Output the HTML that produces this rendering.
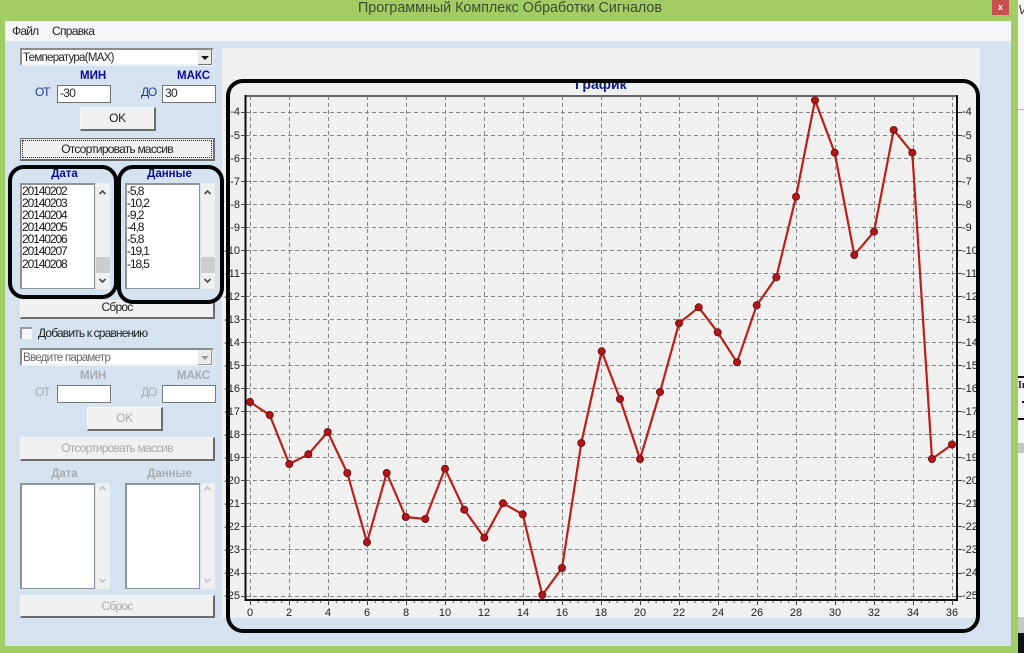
<!DOCTYPE html>
<html lang="ru">
<head>
<meta charset="utf-8">
<title>Программный Комплекс Обработки Сигналов</title>
<style>
html,body{margin:0;padding:0;width:1024px;height:653px;overflow:hidden;background:#a1cd64;}
body{position:relative;font-family:"Liberation Sans","Noto Sans CJK SC",sans-serif;font-size:12px;color:#222;}
div,span{position:absolute;box-sizing:border-box;white-space:nowrap;}
.t{line-height:14px;height:14px;}
.c{text-align:center;}
.head{font-weight:bold;font-size:11.5px;color:#0a0a9c;}
.lab{font-size:12px;color:#1d3f8f;letter-spacing:-1.2px;}
.dis{color:#a9abad;}
.inp{background:#fff;border:1px solid #6f7378;font-size:12px;line-height:15px;padding-left:2px;letter-spacing:-.7px;}
.inpd{background:#fff;border:1px solid #777;}
.btn{background:#f0f0f0;border:1px solid #f8f8f8;border-right:2px solid #6c6c6c;border-bottom:2px solid #6c6c6c;text-align:center;font-size:12px;letter-spacing:-.78px;}
.combo{background:#fff;border:2px solid #8a8c8e;border-right-color:#e6e6e6;border-bottom-color:#eef2f6;font-size:11.5px;line-height:16px;padding-left:1px;letter-spacing:-.72px;}
.arr{background:#ececec;border-right:1px solid #777;border-bottom:1px solid #777;}
.arr i{position:absolute;left:3px;top:6px;width:0;height:0;border-left:4px solid transparent;border-right:4px solid transparent;border-top:4px solid #111;}
.list{background:#fff;border:2px solid #8c949c;border-right-width:1.5px;border-bottom-width:1.5px;}
.row{font-size:12px;line-height:12.1px;letter-spacing:-1.1px;color:#151515;left:0;top:0;white-space:pre;}
.sb{background:#f0f0f0;}
.th{background:#cdcdcd;left:0;width:100%;}
.ring{border:4.5px solid #050505;border-radius:16px;}
</style>
</head>
<body>
<!-- outer window -->
<div style="left:0;top:0;width:1024px;height:653px;background:#a1cd64"></div>
<div class="t" style="left:358px;top:0;width:304px;font-size:14.3px;color:#3d4c30;line-height:16px;height:16px">Программный Комплекс Обработки Сигналов</div>
<div style="left:992px;top:0;width:17px;height:15px;background:#c65050"></div>
<div class="t c" style="left:992px;top:0;width:17px;color:#fff;font-weight:bold;font-size:9px;line-height:14px">x</div>

<!-- neighbouring window on the right edge -->
<div style="left:1018px;top:0;width:6px;height:653px;background:#f6f6f6"></div>
<div class="t" style="left:1018px;top:3px;font-size:13px;font-style:italic;color:#333">V</div>
<div style="left:1018px;top:109px;width:6px;height:1px;background:#bbb"></div>
<div style="left:1018px;top:376px;width:6px;height:2px;background:#111"></div>
<div class="t" style="left:1018px;top:379px;font-weight:bold;font-size:10px;font-family:'Liberation Serif',serif;color:#222">Ін</div>
<div style="left:1022px;top:401px;width:2px;height:2px;background:#111"></div>
<div style="left:1018px;top:418px;width:6px;height:2px;background:#111"></div>
<div style="left:1018px;top:443px;width:6px;height:10px;background:#c6c6c6"></div>
<div style="left:1018px;top:617px;width:6px;height:16px;background:#c8c8c8"></div>
<div style="left:1018px;top:633px;width:6px;height:20px;background:#111"></div>

<!-- client area -->
<div style="left:5px;top:21px;width:1006px;height:625px;background:#d5e3f1"></div>
<div style="left:5px;top:21px;width:1006px;height:20px;background:#f4f6f8"></div>
<div class="t" style="left:12px;top:24px;color:#222;letter-spacing:-.8px">Файл</div>
<div class="t" style="left:52px;top:24px;color:#222;letter-spacing:-.7px">Справка</div>

<!-- left panel, active group -->
<div class="combo" style="left:20px;top:48px;width:194px;height:18px">Температура(MAX)</div>
<div class="arr" style="left:198px;top:50px;width:14px;height:15px"><i></i></div>
<div class="t head" style="left:80px;top:69px">МИН</div>
<div class="t head" style="left:177px;top:69px">МАКС</div>
<div class="t lab" style="left:35px;top:85px">ОТ</div>
<div class="t lab" style="left:141px;top:85px">ДО</div>
<div class="inp" style="left:57px;top:85px;width:54px;height:18px">-30</div>
<div class="inp" style="left:162px;top:85px;width:54px;height:18px">30</div>
<div class="btn" style="left:80px;top:107px;width:76px;height:24px;line-height:21px;letter-spacing:-.3px">OK</div>
<div class="btn" style="left:20px;top:138px;width:195px;height:23px;line-height:21px;border:1px solid #6c6c6c;border-right-width:2px;border-bottom-width:2px">Отсортировать массив</div>
<div style="left:22px;top:140px;width:190px;height:18px;border:1px dotted #222"></div>

<div class="t head c" style="left:20px;top:167px;width:89px">Дата</div>
<div class="t head c" style="left:125px;top:167px;width:89px">Данные</div>
<div class="list" style="left:20px;top:183px;width:75px;height:106px"><span class="row">20140202
20140203
20140204
20140205
20140206
20140207
20140208</span></div>
<div class="sb" style="left:96px;top:183px;width:14px;height:106px"><div class="th" style="top:74px;height:16px"></div></div>
<div class="list" style="left:125px;top:183px;width:75px;height:106px"><span class="row">-5,8
-10,2
-9,2
-4,8
-5,8
-19,1
-18,5</span></div>
<div class="sb" style="left:201px;top:183px;width:14px;height:106px"><div class="th" style="top:74px;height:16px"></div></div>

<div class="btn" style="left:20px;top:300px;width:195px;height:19px;line-height:12px">Сброс</div>

<div style="left:20px;top:327px;width:12px;height:12px;background:#f4f6f8;border-left:2px solid #9a9a9a;border-top:2px solid #9a9a9a"></div>
<div class="t" style="left:38px;top:326px;color:#222;letter-spacing:-.85px">Добавить к сравнению</div>

<!-- left panel, disabled group -->
<div class="combo" style="left:20px;top:348px;width:194px;height:18px;color:#666">Введите параметр</div>
<div class="arr" style="left:198px;top:350px;width:14px;height:15px;border-color:#999"><i style="border-top-color:#999"></i></div>
<div class="t head dis" style="left:80px;top:369px">МИН</div>
<div class="t head dis" style="left:177px;top:369px">МАКС</div>
<div class="t lab dis" style="left:35px;top:385px">ОТ</div>
<div class="t lab dis" style="left:141px;top:385px">ДО</div>
<div class="inpd" style="left:57px;top:385px;width:54px;height:18px"></div>
<div class="inpd" style="left:162px;top:385px;width:54px;height:18px"></div>
<div class="btn dis" style="left:87px;top:407px;width:76px;height:24px;line-height:21px;letter-spacing:-.3px">OK</div>
<div class="btn dis" style="left:20px;top:437px;width:195px;height:24px;line-height:21px">Отсортировать массив</div>
<div class="t head dis c" style="left:20px;top:467px;width:89px">Дата</div>
<div class="t head dis c" style="left:125px;top:467px;width:89px">Данные</div>
<div class="list" style="left:20px;top:483px;width:75px;height:106px"></div>
<div class="sb" style="left:96px;top:483px;width:14px;height:106px"></div>
<div class="list" style="left:125px;top:483px;width:75px;height:106px"></div>
<div class="sb" style="left:201px;top:483px;width:14px;height:106px"></div>
<div class="btn dis" style="left:20px;top:595px;width:195px;height:23px;line-height:21px">Сброс</div>

<!-- scrollbar chevrons -->
<svg style="position:absolute;left:0;top:0" width="1024" height="653" viewBox="0 0 1024 653">
<path d="M99.5 194l3-3 3 3M99.5 279l3 3 3-3M204.500 194l3-3 3 3M204.500 279l3 3 3-3" fill="none" stroke="#4a4a4a" stroke-width="1.6"/>
<path d="M99.500 490l3-3 3 3M99.500 579l3 3 3-3M204.500 490l3-3 3 3M204.500 579l3 3 3-3" fill="none" stroke="#c4c4c4" stroke-width="1.6"/>
</svg>

<!-- chart panel -->
<div style="left:222px;top:48px;width:758px;height:570px;background:#f0f0f0"></div>
<div class="t" style="left:575px;top:77px;width:53px;font-weight:bold;font-size:14px;color:#0a1a8c;line-height:14px">График</div>

<svg style="position:absolute;left:0;top:0" width="1024" height="653" viewBox="0 0 1024 653">
<rect x="246" y="96" width="711" height="503" fill="#f0f0f0"/>
<!-- grid -->
<path fill="none" stroke="#858585" stroke-width="1" stroke-dasharray="4 3" d="M250.500 96V599M289.500 96V599M328.500 96V599M367.500 96V599M406.500 96V599M445.500 96V599M484.500 96V599M523.500 96V599M562.500 96V599M601.500 96V599M640.500 96V599M679.500 96V599M718.500 96V599M757.500 96V599M796.500 96V599M835.500 96V599M874.500 96V599M913.500 96V599M952.500 96V599M246 112.500H956M246 135.500H956M246 158.500H956M246 181.500H956M246 204.500H956M246 227.500H956M246 250.500H956M246 273.500H956M246 296.500H956M246 319.500H956M246 342.500H956M246 365.500H956M246 388.500H956M246 411.500H956M246 434.500H956M246 457.500H956M246 480.500H956M246 503.500H956M246 526.500H956M246 549.500H956M246 573.500H956M246 596.500H956"/>
<!-- frame -->
<path d="M246 96H957" stroke="#666" stroke-width="2" fill="none"/>
<path d="M245.500 95V600H957V95" stroke="#111" stroke-width="2" fill="none"/>
<!-- minor ticks -->
<line x1="250" y1="602" x2="953" y2="602" stroke="#666" stroke-width="2" stroke-dasharray="1 6.800"/>
<!-- major ticks -->
<path fill="none" stroke="#444" stroke-width="1" d="M250.500 600v5M289.500 600v5M328.500 600v5M367.500 600v5M406.500 600v5M445.500 600v5M484.500 600v5M523.500 600v5M562.500 600v5M601.500 600v5M640.500 600v5M679.500 600v5M718.500 600v5M757.500 600v5M796.500 600v5M835.500 600v5M874.500 600v5M913.500 600v5M952.500 600v5M241 112.500h4M241 135.500h4M241 158.500h4M241 181.500h4M241 204.500h4M241 227.500h4M241 250.500h4M241 273.500h4M241 296.500h4M241 319.500h4M241 342.500h4M241 365.500h4M241 388.500h4M241 411.500h4M241 434.500h4M241 457.500h4M241 480.500h4M241 503.500h4M241 526.500h4M241 549.500h4M241 573.500h4M241 596.500h4M958 112.500h4M958 135.500h4M958 158.500h4M958 181.500h4M958 204.500h4M958 227.500h4M958 250.500h4M958 273.500h4M958 296.500h4M958 319.500h4M958 342.500h4M958 365.500h4M958 388.500h4M958 411.500h4M958 434.500h4M958 457.500h4M958 480.500h4M958 503.500h4M958 526.500h4M958 549.500h4M958 573.500h4M958 596.500h4"/>
<!-- axis labels -->
<g font-family="'Liberation Sans',sans-serif" font-size="11" fill="#222" text-anchor="end">
<text x="240" y="115">-4</text><text x="240" y="139">-5</text><text x="240" y="162">-6</text><text x="240" y="185">-7</text><text x="240" y="208">-8</text><text x="240" y="231">-9</text><text x="240" y="254">-10</text><text x="240" y="277">-11</text><text x="240" y="300">-12</text><text x="240" y="323">-13</text><text x="240" y="346">-14</text><text x="240" y="369">-15</text><text x="240" y="392">-16</text><text x="240" y="415">-17</text><text x="240" y="438">-18</text><text x="240" y="461">-19</text><text x="240" y="484">-20</text><text x="240" y="507">-21</text><text x="240" y="530">-22</text><text x="240" y="553">-23</text><text x="240" y="576">-24</text><text x="240" y="599">-25</text>
</g>
<g font-family="'Liberation Sans',sans-serif" font-size="11" fill="#222">
<text x="962" y="115">-4</text><text x="962" y="139">-5</text><text x="962" y="162">-6</text><text x="962" y="185">-7</text><text x="962" y="208">-8</text><text x="962" y="231">-9</text><text x="962" y="254">-10</text><text x="962" y="277">-11</text><text x="962" y="300">-12</text><text x="962" y="323">-13</text><text x="962" y="346">-14</text><text x="962" y="369">-15</text><text x="962" y="392">-16</text><text x="962" y="415">-17</text><text x="962" y="438">-18</text><text x="962" y="461">-19</text><text x="962" y="484">-20</text><text x="962" y="507">-21</text><text x="962" y="530">-22</text><text x="962" y="553">-23</text><text x="962" y="576">-24</text><text x="962" y="599">-25</text>
</g>
<g font-family="'Liberation Sans',sans-serif" font-size="11" fill="#222" text-anchor="middle">
<text x="250" y="616">0</text><text x="289" y="616">2</text><text x="328" y="616">4</text><text x="367" y="616">6</text><text x="406" y="616">8</text><text x="445" y="616">10</text><text x="484" y="616">12</text><text x="523" y="616">14</text><text x="562" y="616">16</text><text x="601" y="616">18</text><text x="640" y="616">20</text><text x="679" y="616">22</text><text x="718" y="616">24</text><text x="757" y="616">26</text><text x="796" y="616">28</text><text x="835" y="616">30</text><text x="874" y="616">32</text><text x="913" y="616">34</text><text x="952" y="616">36</text>
</g>
<!-- series -->
<polyline fill="none" stroke="#bb2018" stroke-width="2.200" stroke-linejoin="round" points="250,402 269.700,415 289.300,464 308.300,454.300 327.700,432 347.300,473 367,542.300 386.700,473 405.700,517 425.300,519 445,468.700 464.300,509.700 484.300,537.700 503,503.300 522.700,514.300 542.300,595 562,568 581.300,443 601.700,351.300 620,399 640,459 660,392 679,323.300 698.700,307.300 717.700,332.300 737,362.300 756.700,305.300 776.300,277.300 796,196.700 815,100.300 834.700,152.700 854.300,255 874,231.700 893.700,130 912.300,152.700 932,459 952,444.500"/>
<g fill="#b8121a" stroke="#6a1512" stroke-width="1">
<circle cx="250" cy="402" r="3.500"/><circle cx="269.700" cy="415" r="3.500"/><circle cx="289.300" cy="464" r="3.500"/><circle cx="308.300" cy="454.300" r="3.500"/><circle cx="327.700" cy="432" r="3.500"/><circle cx="347.300" cy="473" r="3.500"/><circle cx="367" cy="542.300" r="3.500"/><circle cx="386.700" cy="473" r="3.500"/><circle cx="405.700" cy="517" r="3.500"/><circle cx="425.300" cy="519" r="3.500"/><circle cx="445" cy="468.700" r="3.500"/><circle cx="464.300" cy="509.700" r="3.500"/><circle cx="484.300" cy="537.700" r="3.500"/><circle cx="503" cy="503.300" r="3.500"/><circle cx="522.700" cy="514.300" r="3.500"/><circle cx="542.300" cy="595" r="3.500"/><circle cx="562" cy="568" r="3.500"/><circle cx="581.300" cy="443" r="3.500"/><circle cx="601.700" cy="351.300" r="3.500"/><circle cx="620" cy="399" r="3.500"/><circle cx="640" cy="459" r="3.500"/><circle cx="660" cy="392" r="3.500"/><circle cx="679" cy="323.300" r="3.500"/><circle cx="698.700" cy="307.300" r="3.500"/><circle cx="717.700" cy="332.300" r="3.500"/><circle cx="737" cy="362.300" r="3.500"/><circle cx="756.700" cy="305.300" r="3.500"/><circle cx="776.300" cy="277.300" r="3.500"/><circle cx="796" cy="196.700" r="3.500"/><circle cx="815" cy="100.300" r="3.500"/><circle cx="834.700" cy="152.700" r="3.500"/><circle cx="854.300" cy="255" r="3.500"/><circle cx="874" cy="231.700" r="3.500"/><circle cx="893.700" cy="130" r="3.500"/><circle cx="912.300" cy="152.700" r="3.500"/><circle cx="932" cy="459" r="3.500"/><circle cx="952" cy="444.500" r="3.500"/>
</g>
</svg>

<!-- black annotation rings -->
<div class="ring" style="left:226px;top:79px;width:754px;height:554px;border-radius:17px"></div>
<div class="ring" style="left:8px;top:165px;width:110px;height:134px"></div>
<div class="ring" style="left:117px;top:165px;width:107px;height:139px"></div>
</body>
</html>
